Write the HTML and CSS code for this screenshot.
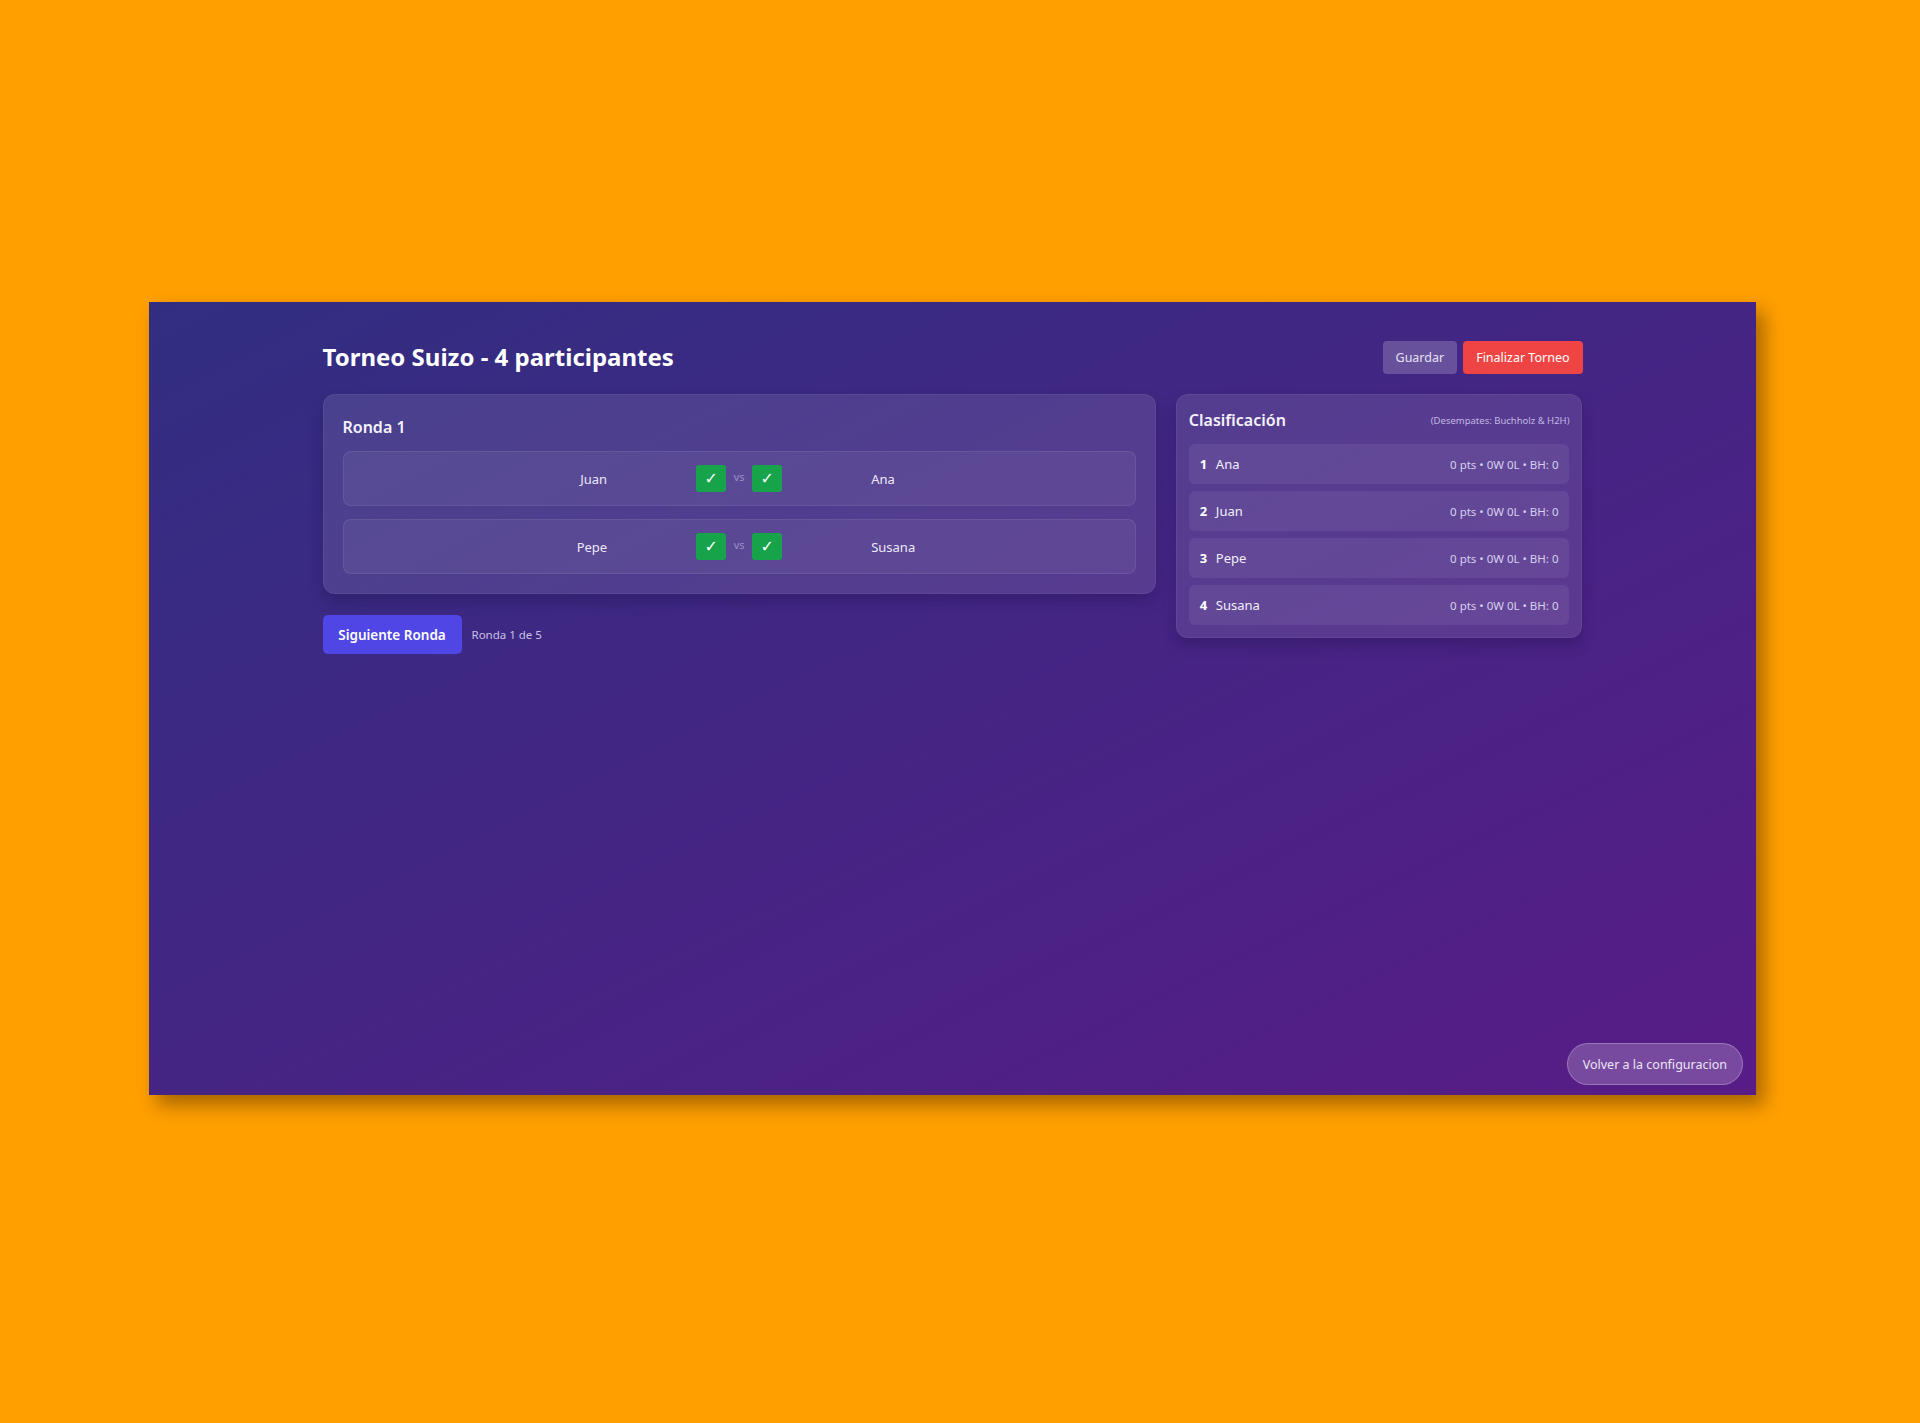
FILE: index.html
```html
<!DOCTYPE html>
<html lang="es">
<head>
<meta charset="utf-8">
<title>Torneo Suizo</title>
<link rel="stylesheet" href="styles.css">
</head>
<body>
<div class="window">
  <div class="container">
    <header class="header">
      <h1 class="title">Torneo Suizo - 4 participantes</h1>
      <div class="actions">
        <button class="btn btn-save">Guardar</button>
        <button class="btn btn-finish">Finalizar Torneo</button>
      </div>
    </header>
    <div class="grid">
      <div class="main">
        <section class="card round-card">
          <h2 class="card-title">Ronda 1</h2>
          <div class="matches">
            <div class="match">
              <span class="player player-left">Juan</span>
              <div class="controls">
                <span class="check">✓</span>
                <span class="vs">vs</span>
                <span class="check">✓</span>
              </div>
              <span class="player player-right">Ana</span>
            </div>
            <div class="match">
              <span class="player player-left">Pepe</span>
              <div class="controls">
                <span class="check">✓</span>
                <span class="vs">vs</span>
                <span class="check">✓</span>
              </div>
              <span class="player player-right">Susana</span>
            </div>
          </div>
        </section>
        <div class="next-row">
          <button class="btn-next">Siguiente Ronda</button>
          <span class="round-info">Ronda 1 de 5</span>
        </div>
      </div>
      <aside class="card standings">
        <div class="standings-head">
          <h2 class="card-title">Clasificación</h2>
          <span class="tiebreak">(Desempates: Buchholz &amp; H2H)</span>
        </div>
        <ol class="standings-list">
          <li class="standing"><span class="rank">1</span><span class="sname">Ana</span><span class="stats">0 pts • 0W 0L • BH: 0</span></li>
          <li class="standing"><span class="rank">2</span><span class="sname">Juan</span><span class="stats">0 pts • 0W 0L • BH: 0</span></li>
          <li class="standing"><span class="rank">3</span><span class="sname">Pepe</span><span class="stats">0 pts • 0W 0L • BH: 0</span></li>
          <li class="standing"><span class="rank">4</span><span class="sname">Susana</span><span class="stats">0 pts • 0W 0L • BH: 0</span></li>
        </ol>
      </aside>
    </div>
  </div>
  <button class="back">Volver a la configuracion</button>
</div>
</body>
</html>
```

FILE: styles.css
```css
* { box-sizing: border-box; }

html, body {
  margin: 0;
  padding: 0;
}

body {
  background: #ffa000;
  font-family: "Noto Sans", "Open Sans", sans-serif;
  color: #ffffff;
  min-height: 1423px;
  padding-top: 302px;
  padding-left: 149px;
}

.window {
  position: relative;
  width: 1607px;
  height: 793px;
  background: linear-gradient(to bottom right, #312e81, #581c87);
  box-shadow: 8px 10px 18px rgba(60, 30, 0, 0.45);
  padding-top: 38px;
}

.container {
  width: 1260px;
  margin: 0 auto;
}

.header {
  display: flex;
  justify-content: space-between;
  align-items: center;
  height: 34px;
  margin-bottom: 20px;
}

.title {
  margin: 0;
  font-size: 24px;
  font-weight: 700;
  line-height: 34px;
  color: #ffffff;
}

.actions {
  display: flex;
  gap: 6px;
}

.btn {
  font-family: inherit;
  font-size: 12.5px;
  border: none;
  border-radius: 4px;
  height: 33px;
  padding: 0 13px;
  cursor: pointer;
}

.btn-save {
  background: rgba(255, 255, 255, 0.2);
  color: #e6e0f4;
}

.btn-finish {
  background: #ef4444;
  color: #ffffff;
  padding: 0 13px;
}

.grid {
  display: grid;
  grid-template-columns: repeat(3, 1fr);
  gap: 20px;
  align-items: start;
}

.main {
  grid-column: span 2;
}

.card {
  background: rgba(255, 255, 255, 0.1);
  border: 1px solid rgba(255, 255, 255, 0.06);
  border-radius: 12px;
  box-shadow: 0 8px 14px rgba(20, 10, 60, 0.25);
}

.round-card {
  padding: 18px 19px 19px;
}

.card-title {
  margin: 0;
  font-size: 16px;
  font-weight: 600;
  line-height: 28px;
  color: #f4f2fb;
}

.round-card .card-title {
  margin-bottom: 10px;
}

.matches {
  display: flex;
  flex-direction: column;
  gap: 13px;
}

.match {
  display: flex;
  justify-content: center;
  align-items: center;
  height: 55px;
  border: 1px solid rgba(255, 255, 255, 0.08);
  border-radius: 8px;
  background: rgba(255, 255, 255, 0.06);
}

.player {
  width: 160px;
  font-size: 13px;
  color: #ece8f8;
}

.player-left {
  text-align: right;
  margin-right: 89px;
}

.player-right {
  text-align: left;
  margin-left: 89px;
}

.controls {
  display: flex;
  align-items: center;
  gap: 6px;
}

.check {
  display: flex;
  align-items: center;
  justify-content: center;
  width: 30px;
  height: 27px;
  background: #16a34a;
  border-radius: 3px;
  color: #ffffff;
  font-family: "DejaVu Sans", sans-serif;
  font-size: 16px;
}

.vs {
  font-size: 11px;
  color: #9a8fcb;
  width: 14px;
  text-align: center;
  margin-top: -4px;
}

.next-row {
  display: flex;
  align-items: center;
  gap: 10px;
  margin-top: 21px;
}

.btn-next {
  font-family: inherit;
  font-size: 13.5px;
  font-weight: 600;
  color: #ffffff;
  background: #4f46e5;
  border: none;
  border-radius: 5px;
  height: 39px;
  width: 139px;
  padding: 0;
}

.round-info {
  font-size: 11.5px;
  color: #c9c0e6;
}

.standings {
  padding: 12px;
}

.standings-head {
  display: flex;
  justify-content: space-between;
  align-items: center;
  height: 26px;
  margin-bottom: 11px;
}

.tiebreak {
  font-size: 9.5px;
  color: #c2b8e2;
}

.standings-list {
  list-style: none;
  margin: 0;
  padding: 0;
  display: flex;
  flex-direction: column;
  gap: 7px;
}

.standing {
  display: flex;
  align-items: center;
  height: 40px;
  padding: 0 11px;
  background: rgba(255, 255, 255, 0.07);
  border-radius: 6px;
}

.rank {
  font-size: 13px;
  font-weight: 700;
  color: #ffffff;
  width: 16px;
}

.sname {
  font-size: 13px;
  color: #f1eefa;
  flex: 1;
}

.stats {
  font-size: 11.5px;
  color: #d8d0ef;
}

.back {
  position: absolute;
  right: 13px;
  bottom: 10px;
  height: 42px;
  padding: 0 15px;
  font-family: inherit;
  font-size: 12.5px;
  color: #ece4f7;
  background: rgba(255, 255, 255, 0.2);
  border: 1px solid rgba(255, 255, 255, 0.25);
  border-radius: 21px;
}
```
